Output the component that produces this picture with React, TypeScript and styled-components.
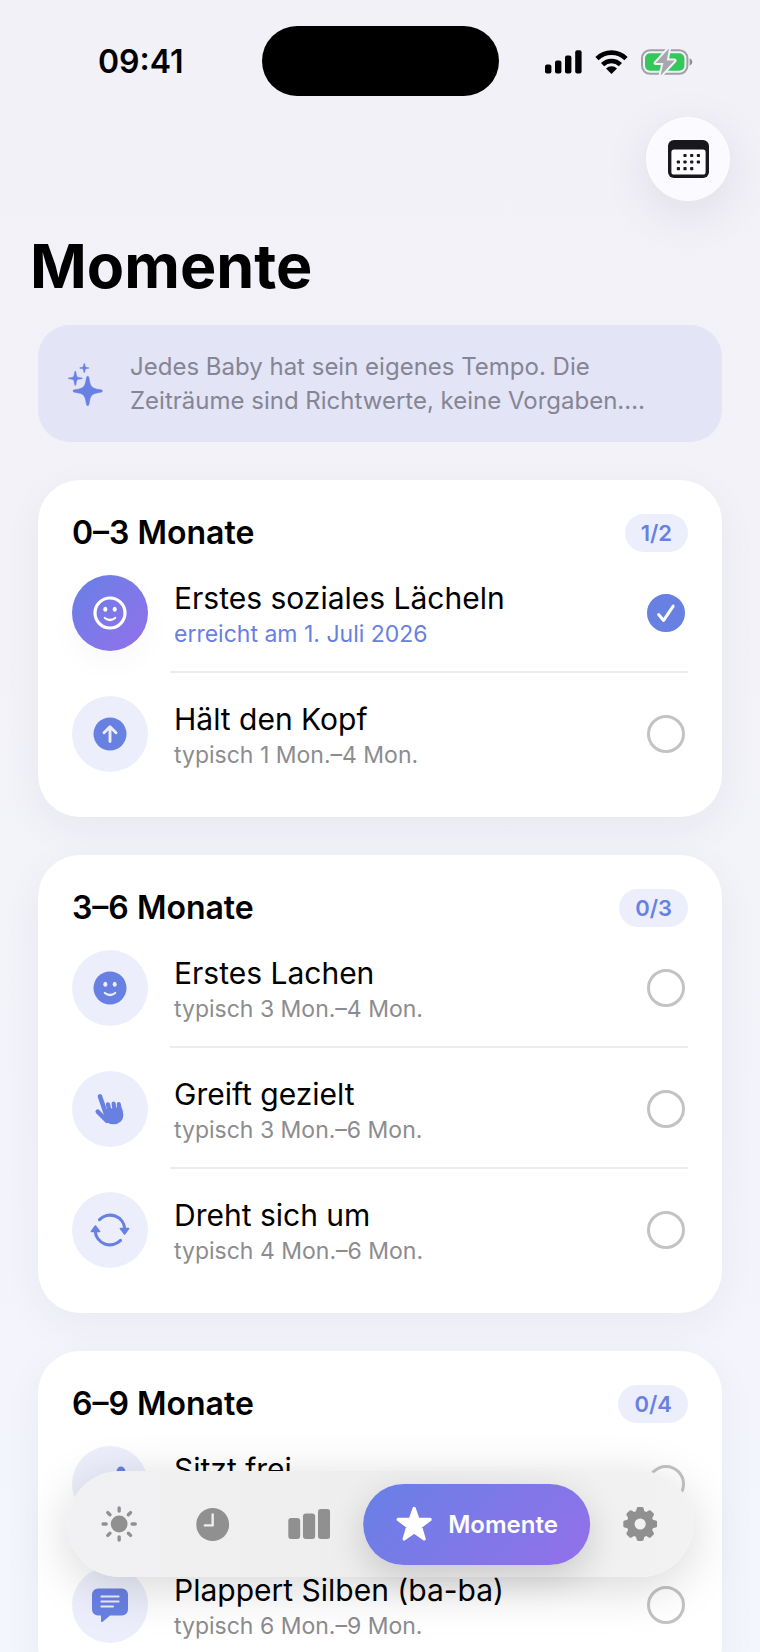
import React, { useState } from 'react';
import styled, { createGlobalStyle, css } from 'styled-components';

const blue = '#6880e2';
const tint = '#eceefb';
const muted = '#8c8c90';
const brandGradient = 'linear-gradient(135deg, #6880e6 0%, #9370ea 100%)';

const GlobalStyle = createGlobalStyle`
  * { box-sizing: border-box; }
  body {
    margin: 0;
    font-family: Inter, "Liberation Sans", sans-serif;
    color: #000;
    -webkit-font-smoothing: antialiased;
  }
  h1, h2, p, ul { margin: 0; padding: 0; }
  ul { list-style: none; }
  button, input { font: inherit; margin: 0; }
  svg { display: block; flex: none; }
`;

const Screen = styled.div`
  position: relative;
  height: 100vh;
  overflow: hidden;
  background: linear-gradient(180deg, #f2f1f8 0%, #f2f2f8 40%, #f4f6fd 100%);
`;

const Scroller = styled.div`
  height: 100%;
  overflow-y: auto;
  scrollbar-width: none;
`;

const StatusBar = styled.header`
  display: grid;
  grid-template-columns: 1fr auto 1fr;
  align-items: center;
  padding: 26px 67px 0 98px;
`;

const Clock = styled.time`
  padding-top: 2px;
  font-size: 32px;
  line-height: 40px;
  font-weight: 600;
`;

const Island = styled.div`
  width: 237px;
  height: 70px;
  margin-right: 31px;
  border-radius: 35px;
  background: #000;
`;

const StatusIcons = styled.div`
  display: flex;
  justify-content: flex-end;
  align-items: center;
  gap: 13px;
  margin-left: -31px;
  padding-top: 2px;
`;

const Toolbar = styled.div`
  display: flex;
  justify-content: flex-end;
  padding: 21px 30px 0;
`;

const RoundButton = styled.button`
  display: grid;
  place-items: center;
  width: 84px;
  height: 84px;
  padding: 0;
  border: 1px solid #fff;
  border-radius: 50%;
  background: #fbfaff;
  box-shadow: 0 12px 50px rgba(20, 20, 50, 0.09);
  cursor: pointer;
`;

const PageTitle = styled.h1`
  padding: 25px 30px 0;
  font-size: 61px;
  line-height: 80px;
  font-weight: 700;
`;

const Content = styled.main`
  display: flex;
  flex-direction: column;
  gap: 38px;
  padding: 19px 38px 220px;
`;

const Hint = styled.section`
  display: flex;
  align-items: center;
  gap: 26px;
  padding: 25px 60px 24px 30px;
  border-radius: 32px;
  background: #e3e4f6;
`;

const HintText = styled.p`
  color: #858593;
  font-size: 24px;
  line-height: 34px;
`;

const Card = styled.section`
  padding: 34px 34px 25px;
  border-radius: 42px;
  background: #fff;
  box-shadow: 0 12px 40px rgba(30, 30, 60, 0.05);
`;

const CardHeader = styled.div`
  display: flex;
  justify-content: space-between;
  align-items: center;
`;

const CardTitle = styled.h2`
  font-size: 32px;
  line-height: 38px;
  font-weight: 600;
`;

const Badge = styled.span`
  padding: 0 16px;
  border-radius: 19px;
  background: ${tint};
  color: ${blue};
  font-size: 22px;
  line-height: 38px;
  font-weight: 600;
`;

const Row = styled.label`
  display: flex;
  gap: 22px;
  cursor: pointer;
`;

const IconCircle = styled.span<{ $done?: boolean }>`
  display: grid;
  place-items: center;
  flex: none;
  width: 76px;
  height: 76px;
  margin-top: 23px;
  border-radius: 50%;
  color: ${blue};
  background: ${tint};
  ${(p) =>
    p.$done &&
    css`
      color: #fff;
      background: ${brandGradient};
      box-shadow: 0 12px 30px rgba(30, 30, 60, 0.03);
    `}
`;

const RowBody = styled.span`
  display: flex;
  flex: 1;
  align-items: center;
  min-width: 0;
  padding: 23px 3px 20px 4px;
  border-bottom: 2px solid #ececee;

  li:last-child & {
    border-bottom: 0;
  }
`;

const RowText = styled.span`
  flex: 1;
  height: 76px;
  padding-top: 3px;
`;

const RowTitle = styled.span`
  display: block;
  font-size: 30px;
  line-height: 40px;
`;

const RowNote = styled.span<{ $done?: boolean }>`
  display: block;
  color: ${(p) => (p.$done ? blue : muted)};
  font-size: 23px;
  line-height: 32px;
`;

const Tick = styled.span`
  display: grid;
  width: 38px;
  height: 38px;

  > * {
    grid-area: 1 / 1;
  }
  svg {
    pointer-events: none;
  }
`;

const TickBox = styled.input`
  appearance: none;
  width: 38px;
  height: 38px;
  border: 3px solid #c3c3c5;
  border-radius: 50%;
  cursor: pointer;

  &:checked {
    border-color: ${blue};
    background: ${blue};
  }
`;

const TabBar = styled.nav`
  position: absolute;
  bottom: 75px;
  left: 50%;
  transform: translateX(-50%);
  display: flex;
  align-items: center;
  gap: 11px;
  height: 106px;
  padding: 0 12px 0 10px;
  border-radius: 53px;
  background: linear-gradient(90deg, #f1f1f3, #eeeeee 50%, #f2f2f2);
  box-shadow: 0 10px 50px rgba(0, 0, 0, 0.16);
`;

const Tab = styled.button<{ $active?: boolean }>`
  display: flex;
  align-items: center;
  gap: 16px;
  height: 81px;
  padding: 0 24px;
  border: 0;
  border-radius: 41px;
  background: none;
  color: #909090;
  font-size: 24px;
  font-weight: 600;
  cursor: pointer;
  ${(p) =>
    p.$active &&
    css`
      margin: 0 -2px;
      padding: 0 32px 0 33px;
      color: #fff;
      background: ${brandGradient};
      box-shadow: 0 12px 36px rgba(0, 0, 0, 0.16);
    `}
`;

const Glyph = ({ children }: { children: React.ReactNode }) => (
  <svg width="40" height="40" viewBox="-20 -20 40 40" fill="currentColor" aria-hidden="true">
    {children}
  </svg>
);

const Face = ({ color }: { color: string }) => (
  <>
    <ellipse cx="-4.7" cy="-3.8" rx="2" ry="2.5" fill={color} />
    <ellipse cx="4.7" cy="-3.8" rx="2" ry="2.5" fill={color} />
    <path d="M-5.2 5Q0 9 5.2 5" fill="none" stroke={color} strokeWidth="2.2" strokeLinecap="round" />
  </>
);

const SmileOutline = () => (
  <Glyph>
    <circle r="15" fill="none" stroke="currentColor" strokeWidth="3.2" />
    <Face color="currentColor" />
  </Glyph>
);

const SmileFilled = () => (
  <Glyph>
    <circle r="16.5" />
    <Face color={tint} />
  </Glyph>
);

const ArrowUp = () => (
  <Glyph>
    <circle r="16.5" />
    <path d="M0 7.5V-7M-6 -1.2L0 -7.2L6 -1.2" fill="none" stroke={tint} strokeWidth="2.9" strokeLinecap="round" strokeLinejoin="round" />
  </Glyph>
);

const Hand = () => (
  <Glyph>
    <g stroke="currentColor" strokeLinecap="round" strokeLinejoin="round">
      <path d="M-10 -12.6L-4 5" strokeWidth="4.6" />
      <path d="M-12.3 2.6L-3 12" strokeWidth="4.4" />
      <path d="M-2 -4.6L0 4M3.6 -5.4L5 3M8.8 -4.8L10 4" strokeWidth="4.2" />
      <path d="M-5 2L10.5 -1C13 4 12.6 9 10 11.6C6.5 15 0 14.6 -3 11.6Z" strokeWidth="2.4" />
    </g>
  </Glyph>
);

const Cycle = () => (
  <Glyph>
    <g fill="none" stroke="currentColor" strokeWidth="3.2" strokeLinecap="round">
      <path d="M-10.5 -10.4A14.8 14.8 0 0 1 14.8 -1" />
      <path d="M10.5 10.4A14.8 14.8 0 0 1 -14.8 1" />
    </g>
    <g stroke="currentColor" strokeWidth="1.6" strokeLinejoin="round">
      <path d="M10.4 -1.4H18.6L14.6 4Z" />
      <path d="M-10.4 1.4H-18.6L-14.6 -4Z" />
    </g>
  </Glyph>
);

const SittingFigure = () => (
  <Glyph>
    <circle cx="11" cy="-13" r="4.4" />
    <path d="M8 -6L4 5L-8 8M4 -2L-5 -1" fill="none" stroke="currentColor" strokeWidth="4" strokeLinecap="round" strokeLinejoin="round" />
  </Glyph>
);

const Speech = () => (
  <Glyph>
    <path d="M-12 -16.6H12A6 6 0 0 1 18 -10.6V4.4A6 6 0 0 1 12 10.4H0L-7 16.6Q-9 18 -9 15.6V10.4H-12A6 6 0 0 1 -18 4.4V-10.6A6 6 0 0 1 -12 -16.6Z" />
    <path d="M-8.6 -8.6H8.6M-8.6 -3.6H8.6M-8.6 1.6H3" stroke={tint} strokeWidth="2" strokeLinecap="round" />
  </Glyph>
);

const Sparkles = () => (
  <svg width="36" height="44" viewBox="0 0 36 44" fill={blue} aria-hidden="true">
    <path d="M19.7 14.3C20.7 14.3 20.9 15.2 21.2 17.2C22.4 24.6 23.6 26.4 31.6 27.6C33.4 27.9 34.4 28.1 34.4 29C34.4 29.9 33.4 30.1 31.6 30.4C23.6 31.6 22.4 33.4 21.2 40.8C20.9 42.8 20.7 43.7 19.7 43.7C18.7 43.7 18.5 42.8 18.2 40.8C17 33.4 15.8 31.6 7.8 30.4C6 30.1 5 29.9 5 29C5 28.1 6 27.9 7.8 27.6C15.8 26.4 17 24.6 18.2 17.2C18.5 15.2 18.7 14.3 19.7 14.3Z" stroke={blue} strokeWidth="0.6" />
    <path d="M7.3 9C8.1 9 8.1 14 9.2 14.9S14.4 15.6 14.4 16.3S10.3 16.8 9.2 17.8S8.1 23.6 7.3 23.6S6.5 18.7 5.4 17.8S.2 17 .2 16.3S4.3 15.8 5.4 14.9S6.5 9 7.3 9Z" stroke={blue} strokeWidth="0.6" />
    <path d="M16.3 1.4C16.9 1.4 16.9 4.4 17.6 5.1S20.9 5.6 20.9 6S18.3 6.3 17.6 7S16.9 10.7 16.3 10.7S15.7 7.7 15 7S11.7 6.5 11.7 6S14.3 5.8 15 5.1S15.7 1.4 16.3 1.4Z" stroke={blue} strokeWidth="0.6" />
  </svg>
);

const CalendarIcon = () => (
  <svg width="41" height="38" viewBox="0 0 41 38" aria-hidden="true">
    <rect width="41" height="38" rx="6" fill="#17171d" />
    <rect x="3.4" y="9.6" width="34.2" height="25" rx="2.6" fill="#fdfcff" />
    {[
      [17, 15.5], [23.7, 15.5], [30.4, 15.5],
      [10.4, 22], [17, 22], [23.7, 22], [30.4, 22],
      [10.4, 28.6], [17, 28.6], [23.7, 28.6],
    ].map(([x, y]) => (
      <rect key={`${x}-${y}`} x={x - 1.6} y={y - 1.6} width="3.2" height="3.2" rx="0.8" fill="#17171d" />
    ))}
  </svg>
);

const SignalIcon = () => (
  <svg width="37" height="24" viewBox="0 0 37 24" aria-hidden="true">
    <rect x="0" y="14.6" width="6.4" height="9" rx="2" />
    <rect x="10" y="10.4" width="6.4" height="13.2" rx="2" />
    <rect x="20" y="5.4" width="6.4" height="18.2" rx="2" />
    <rect x="30.2" y="0.2" width="6.4" height="23.4" rx="2" />
  </svg>
);

const WifiIcon = () => (
  <svg width="33" height="24" viewBox="0 0 33 24" aria-hidden="true">
    <g fill="none" stroke="#000" strokeWidth="4.6">
      <path d="M2 8.6A20.6 20.6 0 0 1 31 8.6" />
      <path d="M7.6 14.6A12.7 12.7 0 0 1 25.4 14.6" />
    </g>
    <path d="M11 18.6A7.8 7.8 0 0 1 22 18.6L16.5 24Z" />
  </svg>
);

const BatteryIcon = () => (
  <svg width="52" height="26" viewBox="0 0 52 26" aria-hidden="true">
    <rect x="1" y="1.2" width="45.4" height="23.6" rx="8" fill="none" stroke="#a0a0a6" strokeWidth="2" />
    <path d="M48.6 9.2Q51.4 10.4 51.4 13T48.6 16.8Z" fill="#8e8e94" />
    <rect x="4" y="4.2" width="39.4" height="17.6" rx="5" fill="#34c759" />
    <path d="M28 -.6L14.6 14H22.4L19.6 26.6L33.6 11.6H25.8Z" fill="#a6a6ab" stroke="#f2f1f8" strokeWidth="4" paintOrder="stroke" strokeLinejoin="round" />
  </svg>
);

const CheckMark = () => (
  <svg width="38" height="38" viewBox="0 0 38 38" aria-hidden="true">
    <path d="M11.6 20.6L16.6 26.4L26.2 12.2" fill="none" stroke="#fff" strokeWidth="3" strokeLinecap="round" strokeLinejoin="round" />
  </svg>
);

const SunIcon = () => (
  <svg width="36" height="36" viewBox="-18 -18 36 36" fill="currentColor" aria-hidden="true">
    <circle r="8.4" />
    {[0, 45, 90, 135, 180, 225, 270, 315].map((a) => (
      <path key={a} d="M0 -13V-16.1" transform={`rotate(${a})`} stroke="currentColor" strokeWidth="3.4" strokeLinecap="round" />
    ))}
  </svg>
);

const ClockIcon = () => (
  <svg width="33" height="33" viewBox="-16.5 -16.5 33 33" aria-hidden="true">
    <circle r="16.5" fill="currentColor" />
    <path d="M0 -10V.9H-7.8" fill="none" stroke="#efefef" strokeWidth="2.4" strokeLinecap="round" strokeLinejoin="round" />
  </svg>
);

const BarsIcon = () => (
  <svg width="42" height="30" viewBox="0 0 42 30" fill="currentColor" aria-hidden="true">
    <rect x="0" y="9" width="12" height="21" rx="3" />
    <rect x="14.8" y="4.6" width="12.2" height="25.4" rx="3" />
    <rect x="29.8" y="0" width="12.2" height="30" rx="3" />
  </svg>
);

const StarIcon = () => (
  <svg width="36" height="36" viewBox="0 0 36 36" fill="currentColor" aria-hidden="true">
    <path
      d="M18 2.4L21.8 13.2L34 13.4L24.4 20.6L28 33L18 26L8 33L11.6 20.6L2 13.4L14.2 13.2Z"
      stroke="currentColor"
      strokeWidth="3.2"
      strokeLinejoin="round"
    />
  </svg>
);

const GearIcon = () => (
  <svg width="34" height="34" viewBox="-17 -17 34 34" aria-hidden="true">
    <circle r="9.5" fill="none" stroke="currentColor" strokeWidth="7.8" />
    {[0, 45, 90, 135, 180, 225, 270, 315].map((a) => (
      <path
        key={a}
        d="M-4.6 -11L-3.5 -15.6Q-3.2 -17 -1.8 -17H1.8Q3.2 -17 3.5 -15.6L4.6 -11Z"
        transform={`rotate(${a})`}
        fill="currentColor"
      />
    ))}
  </svg>
);

type Milestone = {
  title: string;
  note?: string;
  done?: boolean;
  icon: React.ReactNode;
};

type Group = { title: string; count: string; items: Milestone[] };

const groups: Group[] = [
  {
    title: '0–3 Monate',
    count: '1/2',
    items: [
      { title: 'Erstes soziales Lächeln', note: 'erreicht am 1. Juli 2026', done: true, icon: <SmileOutline /> },
      { title: 'Hält den Kopf', note: 'typisch 1 Mon.–4 Mon.', icon: <ArrowUp /> },
    ],
  },
  {
    title: '3–6 Monate',
    count: '0/3',
    items: [
      { title: 'Erstes Lachen', note: 'typisch 3 Mon.–4 Mon.', icon: <SmileFilled /> },
      { title: 'Greift gezielt', note: 'typisch 3 Mon.–6 Mon.', icon: <Hand /> },
      { title: 'Dreht sich um', note: 'typisch 4 Mon.–6 Mon.', icon: <Cycle /> },
    ],
  },
  {
    title: '6–9 Monate',
    count: '0/4',
    items: [
      { title: 'Sitzt frei', icon: <SittingFigure /> },
      { title: 'Plappert Silben (ba-ba)', note: 'typisch 6 Mon.–9 Mon.', icon: <Speech /> },
    ],
  },
];

function MilestoneRow({ item }: { item: Milestone }) {
  const [checked, setChecked] = useState(Boolean(item.done));
  return (
    <li>
      <Row>
        <IconCircle $done={item.done}>{item.icon}</IconCircle>
        <RowBody>
          <RowText>
            <RowTitle>{item.title}</RowTitle>
            {item.note && <RowNote $done={item.done}>{item.note}</RowNote>}
          </RowText>
          <Tick>
            <TickBox type="checkbox" checked={checked} onChange={() => setChecked(!checked)} />
            {checked && <CheckMark />}
          </Tick>
        </RowBody>
      </Row>
    </li>
  );
}

export default function App() {
  return (
    <Screen>
      <GlobalStyle />
      <Scroller>
        <StatusBar>
          <Clock>09:41</Clock>
          <Island />
          <StatusIcons>
            <SignalIcon />
            <WifiIcon />
            <BatteryIcon />
          </StatusIcons>
        </StatusBar>
        <Toolbar>
          <RoundButton type="button">
            <CalendarIcon />
          </RoundButton>
        </Toolbar>
        <PageTitle>Momente</PageTitle>
        <Content>
          <Hint>
            <Sparkles />
            <HintText>
              Jedes Baby hat sein eigenes Tempo. Die Zeiträume sind Richtwerte, keine Vorgaben.…
            </HintText>
          </Hint>
          {groups.map((group) => (
            <Card key={group.title}>
              <CardHeader>
                <CardTitle>{group.title}</CardTitle>
                <Badge>{group.count}</Badge>
              </CardHeader>
              <ul>
                {group.items.map((item) => (
                  <MilestoneRow key={item.title} item={item} />
                ))}
              </ul>
            </Card>
          ))}
        </Content>
      </Scroller>
      <TabBar>
        <Tab type="button"><SunIcon /></Tab>
        <Tab type="button"><ClockIcon /></Tab>
        <Tab type="button"><BarsIcon /></Tab>
        <Tab type="button" $active><StarIcon />Momente</Tab>
        <Tab type="button"><GearIcon /></Tab>
      </TabBar>
    </Screen>
  );
}
